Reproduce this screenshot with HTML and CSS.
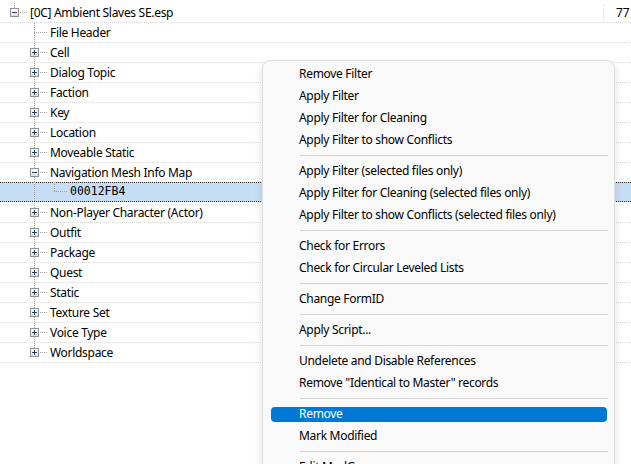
FILE: index.html
```html
<!DOCTYPE html>
<html>
<head>
<meta charset="utf-8">
<link rel="stylesheet" href="styles.css">
</head>
<body>
<div class="tree">
  <div class="row">
    <div class="pad"></div>
    <div class="c top"><svg class="box" width="9" height="9" viewBox="0 0 9 9"><rect x="0.5" y="0.5" width="8" height="8" fill="url(#g)" stroke="#919191"/><path d="M2 4.5h5" stroke="#2b3d5f"/></svg></div>
    <div class="label">[0C] Ambient Slaves SE.esp</div>
    <div class="col2">77</div>
  </div>
  <div class="row"><div class="pad"></div><div class="g"></div><div class="c full"></div><div class="label">File Header</div></div>
  <div class="row"><div class="pad"></div><div class="g"></div><div class="c full"><svg class="box" width="9" height="9" viewBox="0 0 9 9"><rect x="0.5" y="0.5" width="8" height="8" fill="url(#g)" stroke="#919191"/><path d="M2 4.5h5M4.5 2v5" stroke="#2b3d5f"/></svg></div><div class="label">Cell</div></div>
  <div class="row"><div class="pad"></div><div class="g"></div><div class="c full"><svg class="box" width="9" height="9" viewBox="0 0 9 9"><rect x="0.5" y="0.5" width="8" height="8" fill="url(#g)" stroke="#919191"/><path d="M2 4.5h5M4.5 2v5" stroke="#2b3d5f"/></svg></div><div class="label">Dialog Topic</div></div>
  <div class="row"><div class="pad"></div><div class="g"></div><div class="c full"><svg class="box" width="9" height="9" viewBox="0 0 9 9"><rect x="0.5" y="0.5" width="8" height="8" fill="url(#g)" stroke="#919191"/><path d="M2 4.5h5M4.5 2v5" stroke="#2b3d5f"/></svg></div><div class="label">Faction</div></div>
  <div class="row"><div class="pad"></div><div class="g"></div><div class="c full"><svg class="box" width="9" height="9" viewBox="0 0 9 9"><rect x="0.5" y="0.5" width="8" height="8" fill="url(#g)" stroke="#919191"/><path d="M2 4.5h5M4.5 2v5" stroke="#2b3d5f"/></svg></div><div class="label">Key</div></div>
  <div class="row"><div class="pad"></div><div class="g"></div><div class="c full"><svg class="box" width="9" height="9" viewBox="0 0 9 9"><rect x="0.5" y="0.5" width="8" height="8" fill="url(#g)" stroke="#919191"/><path d="M2 4.5h5M4.5 2v5" stroke="#2b3d5f"/></svg></div><div class="label">Location</div></div>
  <div class="row"><div class="pad"></div><div class="g"></div><div class="c full"><svg class="box" width="9" height="9" viewBox="0 0 9 9"><rect x="0.5" y="0.5" width="8" height="8" fill="url(#g)" stroke="#919191"/><path d="M2 4.5h5M4.5 2v5" stroke="#2b3d5f"/></svg></div><div class="label">Moveable Static</div></div>
  <div class="row"><div class="pad"></div><div class="g"></div><div class="c full"><svg class="box" width="9" height="9" viewBox="0 0 9 9"><rect x="0.5" y="0.5" width="8" height="8" fill="url(#g)" stroke="#919191"/><path d="M2 4.5h5" stroke="#2b3d5f"/></svg></div><div class="label">Navigation Mesh Info Map</div></div>
  <div class="row sel"><div class="pad"></div><div class="g"></div><div class="g pass"></div><div class="c top"></div><div class="label mono">00012FB4</div></div>
  <div class="row"><div class="pad"></div><div class="g"></div><div class="c full"><svg class="box" width="9" height="9" viewBox="0 0 9 9"><rect x="0.5" y="0.5" width="8" height="8" fill="url(#g)" stroke="#919191"/><path d="M2 4.5h5M4.5 2v5" stroke="#2b3d5f"/></svg></div><div class="label">Non-Player Character (Actor)</div></div>
  <div class="row"><div class="pad"></div><div class="g"></div><div class="c full"><svg class="box" width="9" height="9" viewBox="0 0 9 9"><rect x="0.5" y="0.5" width="8" height="8" fill="url(#g)" stroke="#919191"/><path d="M2 4.5h5M4.5 2v5" stroke="#2b3d5f"/></svg></div><div class="label">Outfit</div></div>
  <div class="row"><div class="pad"></div><div class="g"></div><div class="c full"><svg class="box" width="9" height="9" viewBox="0 0 9 9"><rect x="0.5" y="0.5" width="8" height="8" fill="url(#g)" stroke="#919191"/><path d="M2 4.5h5M4.5 2v5" stroke="#2b3d5f"/></svg></div><div class="label">Package</div></div>
  <div class="row"><div class="pad"></div><div class="g"></div><div class="c full"><svg class="box" width="9" height="9" viewBox="0 0 9 9"><rect x="0.5" y="0.5" width="8" height="8" fill="url(#g)" stroke="#919191"/><path d="M2 4.5h5M4.5 2v5" stroke="#2b3d5f"/></svg></div><div class="label">Quest</div></div>
  <div class="row"><div class="pad"></div><div class="g"></div><div class="c full"><svg class="box" width="9" height="9" viewBox="0 0 9 9"><rect x="0.5" y="0.5" width="8" height="8" fill="url(#g)" stroke="#919191"/><path d="M2 4.5h5M4.5 2v5" stroke="#2b3d5f"/></svg></div><div class="label">Static</div></div>
  <div class="row"><div class="pad"></div><div class="g"></div><div class="c full"><svg class="box" width="9" height="9" viewBox="0 0 9 9"><rect x="0.5" y="0.5" width="8" height="8" fill="url(#g)" stroke="#919191"/><path d="M2 4.5h5M4.5 2v5" stroke="#2b3d5f"/></svg></div><div class="label">Texture Set</div></div>
  <div class="row"><div class="pad"></div><div class="g"></div><div class="c full"><svg class="box" width="9" height="9" viewBox="0 0 9 9"><rect x="0.5" y="0.5" width="8" height="8" fill="url(#g)" stroke="#919191"/><path d="M2 4.5h5M4.5 2v5" stroke="#2b3d5f"/></svg></div><div class="label">Voice Type</div></div>
  <div class="row"><div class="pad"></div><div class="g"></div><div class="c top"><svg class="box" width="9" height="9" viewBox="0 0 9 9"><rect x="0.5" y="0.5" width="8" height="8" fill="url(#g)" stroke="#919191"/><path d="M2 4.5h5M4.5 2v5" stroke="#2b3d5f"/></svg></div><div class="label">Worldspace</div></div>
</div>

<svg width="0" height="0" class="defs"><defs><linearGradient id="g" x1="0" y1="0" x2="0" y2="1"><stop offset="0" stop-color="#ffffff"/><stop offset="1" stop-color="#dcdcdc"/></linearGradient></defs></svg>

<div class="menu">
  <div class="item">Remove Filter</div>
  <div class="item">Apply Filter</div>
  <div class="item">Apply Filter for Cleaning</div>
  <div class="item">Apply Filter to show Conflicts</div>
  <div class="sep"></div>
  <div class="item">Apply Filter (selected files only)</div>
  <div class="item">Apply Filter for Cleaning (selected files only)</div>
  <div class="item">Apply Filter to show Conflicts (selected files only)</div>
  <div class="sep"></div>
  <div class="item">Check for Errors</div>
  <div class="item">Check for Circular Leveled Lists</div>
  <div class="sep"></div>
  <div class="item">Change FormID</div>
  <div class="sep"></div>
  <div class="item">Apply Script...</div>
  <div class="sep"></div>
  <div class="item">Undelete and Disable References</div>
  <div class="item">Remove "Identical to Master" records</div>
  <div class="sep"></div>
  <div class="item hl"><span class="hlbar"></span><span class="t">Remove</span></div>
  <div class="item">Mark Modified</div>
  <div class="sep"></div>
  <div class="item">Edit ModGroups</div>
</div>
</body>
</html>
```

FILE: styles.css
```css
html, body {
  margin: 0;
  padding: 0;
  background: #ffffff;
  overflow: hidden;
}
body {
  width: 631px;
  height: 464px;
  position: relative;
  font-family: "Segoe UI", "Noto Sans", "Open Sans", sans-serif;
  font-size: 12px;
  letter-spacing: -0.3px;
  color: #000;
}
.defs { position: absolute; }
.tree {
  padding-top: 3px;
  display: flex;
  flex-direction: column;
}
.row {
  height: 20px;
  display: flex;
  align-items: stretch;
  background: repeating-linear-gradient(to right, #d9d9d9 0 1px, transparent 1px 2px) left bottom / 100% 1px no-repeat;
}
.row.sel {
  background-color: #c6def5;
  background-image: repeating-linear-gradient(to right, #222 0 1px, transparent 1px 2px), repeating-linear-gradient(to right, #222 0 1px, transparent 1px 2px);
  background-position: left top, left bottom;
  background-size: 100% 1px, 100% 1px;
  background-repeat: no-repeat;
  margin-top: -1px;
  height: 20px;
  margin-bottom: 1px;
}
.pad { width: 4px; flex: none; }
.g { width: 20px; flex: none; }
.g.pass {
  background: repeating-linear-gradient(to bottom, #a0a0a0 0 1px, transparent 1px 2px) 10px 0 / 1px 100% no-repeat;
}
.c {
  width: 24px;
  flex: none;
  display: flex;
  align-items: center;
  padding-left: 6px;
  box-sizing: border-box;
}
.c.full {
  background:
    repeating-linear-gradient(to bottom, #a0a0a0 0 1px, transparent 1px 2px) 10px 0 / 1px 100% no-repeat,
    repeating-linear-gradient(to right, #a0a0a0 0 1px, transparent 1px 2px) 10px 9px / 14px 1px no-repeat;
}
.c.top {
  background:
    repeating-linear-gradient(to bottom, #a0a0a0 0 1px, transparent 1px 2px) 10px 0 / 1px 10px no-repeat,
    repeating-linear-gradient(to right, #a0a0a0 0 1px, transparent 1px 2px) 10px 9px / 14px 1px no-repeat;
}
.box { display: block; margin-top: -1px; }
.label {
  margin-left: 2px;
  line-height: 19px;
  white-space: nowrap;
}
.mono {
  font-family: "DejaVu Sans Mono", monospace;
  font-size: 11.5px;
  letter-spacing: 0;
}
.col2 {
  margin-left: auto;
  width: 28px;
  box-sizing: border-box;
  padding-left: 13px;
  line-height: 19px;
  letter-spacing: 0;
  background: repeating-linear-gradient(to bottom, #d9d9d9 0 1px, transparent 1px 2px) 0 -3px / 1px 23px no-repeat;
  overflow: hidden;
  white-space: nowrap;
}
.menu {
  position: absolute;
  left: 262px;
  top: 60px;
  width: 353px;
  height: 430px;
  box-sizing: border-box;
  background: #f9f9f9;
  border: 1px solid #dedede;
  border-radius: 8px;
  box-shadow: 0 4px 10px rgba(0,0,0,0.12);
  padding-top: 2px;
  display: flex;
  flex-direction: column;
}
.item {
  height: 22px;
  line-height: 22px;
  padding-left: 36px;
  white-space: nowrap;
  position: relative;
  flex: none;
}
.sep {
  height: 1px;
  margin: 4px 6px 4px 37px;
  background: #d6d6d6;
  flex: none;
}
.item.hl { color: #ffffff; }
.hlbar {
  position: absolute;
  left: 8px;
  right: 7px;
  top: 4px;
  height: 15px;
  background: #0078d4;
  border-radius: 4px;
}
.item.hl .t { position: relative; }
```
